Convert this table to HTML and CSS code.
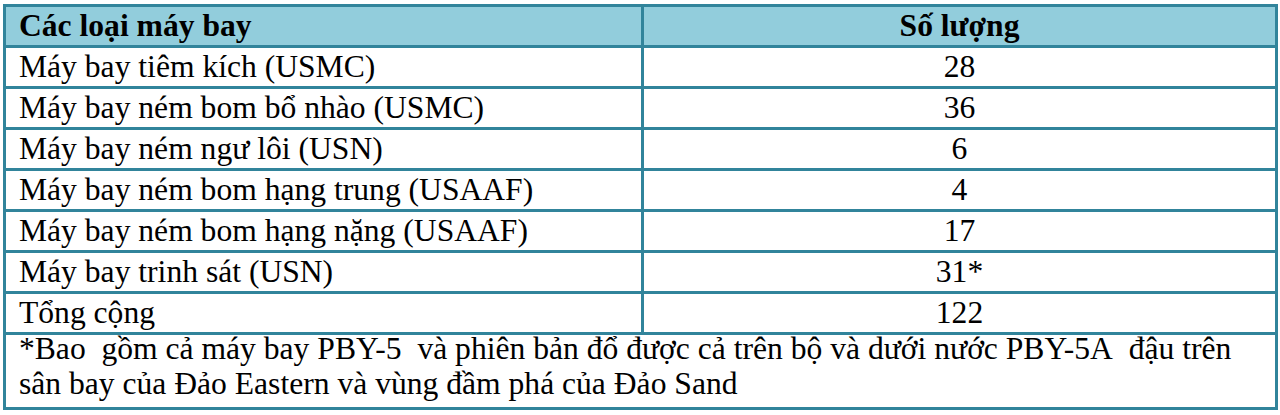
FILE: index.html
```html
<!DOCTYPE html>
<html lang="vi">
<head>
<meta charset="utf-8">
<title>Các loại máy bay</title>
<link rel="stylesheet" href="styles.css">
</head>
<body>
<table class="aircraft">
  <thead>
    <tr>
      <th class="col-type">Các loại máy bay</th>
      <th class="col-count">Số lượng</th>
    </tr>
  </thead>
  <tbody>
    <tr><td class="col-type">Máy bay tiêm kích (USMC)</td><td class="col-count">28</td></tr>
    <tr><td class="col-type">Máy bay ném bom bổ nhào (USMC)</td><td class="col-count">36</td></tr>
    <tr><td class="col-type">Máy bay ném ngư lôi (USN)</td><td class="col-count">6</td></tr>
    <tr><td class="col-type">Máy bay ném bom hạng trung (USAAF)</td><td class="col-count">4</td></tr>
    <tr><td class="col-type">Máy bay ném bom hạng nặng (USAAF)</td><td class="col-count">17</td></tr>
    <tr><td class="col-type">Máy bay trinh sát (USN)</td><td class="col-count">31*</td></tr>
    <tr><td class="col-type">Tổng cộng</td><td class="col-count">122</td></tr>
    <tr class="note-row">
      <td colspan="2" class="note"><div class="note-text">*Bao&nbsp; gồm cả máy bay PBY-5&nbsp; và phiên bản đổ được cả trên bộ và dưới nước PBY-5A&nbsp; đậu trên<br>sân bay của Đảo Eastern và vùng đầm phá của Đảo Sand</div></td>
    </tr>
  </tbody>
</table>
</body>
</html>
```
FILE: styles.css
```css
html, body {
  margin: 0;
  padding: 0;
  background: #ffffff;
}

body {
  padding: 4px 0 0 3px;
  font-family: "Liberation Serif", "Times New Roman", serif;
  color: #000000;
}

.aircraft {
  box-sizing: border-box;
  width: 1275px;
  border: 3px solid #31849b;
  border-collapse: separate;
  border-spacing: 0;
  table-layout: fixed;
  font-size: 31.6px;
}

.aircraft th,
.aircraft td {
  padding: 3px 0 0 0;
  border-bottom: 3px solid #31849b;
  vertical-align: top;
}

.aircraft th {
  background: #92cddc;
  font-weight: bold;
  height: 35px;
  line-height: 31px;
}

.aircraft td {
  height: 35px;
  line-height: 31px;
  font-weight: normal;
}

.col-count {
  text-align: center;
}

.aircraft th.col-type,
.aircraft td.col-type {
  box-sizing: content-box;
  width: 622px;
  text-align: left;
  padding-left: 13px;
  border-right: 3px solid #31849b;
}

.aircraft .note-row td.note {
  border-bottom: none;
  border-right: none;
  height: 72px;
  padding: 0 0 0 13px;
  line-height: 35px;
}

.note-text {
  margin-top: -4px;
  white-space: nowrap;
}
```
